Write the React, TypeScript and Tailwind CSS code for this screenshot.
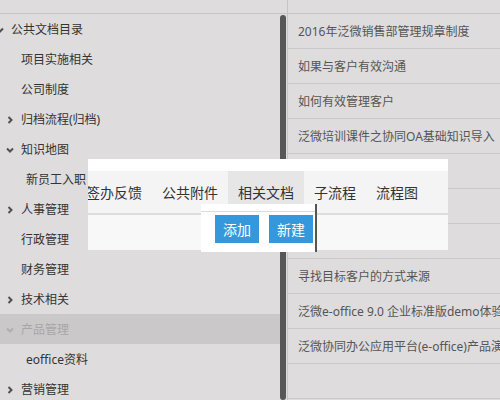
import React from "react";

type Chev = "down" | "right" | null;

const tree: { label: string; pad: string; chev: Chev; active?: boolean }[] = [
	{ label: "公共文档目录", pad: "pl-[4px]", chev: "down" },
	{ label: "项目实施相关", pad: "pl-[29px]", chev: null },
	{ label: "公司制度", pad: "pl-[29px]", chev: null },
	{ label: "归档流程(归档)", pad: "pl-[14px]", chev: "right" },
	{ label: "知识地图", pad: "pl-[14px]", chev: "down" },
	{ label: "新员工入职", pad: "pl-[34px]", chev: null },
	{ label: "人事管理", pad: "pl-[14px]", chev: "right" },
	{ label: "行政管理", pad: "pl-[29px]", chev: null },
	{ label: "财务管理", pad: "pl-[29px]", chev: null },
	{ label: "技术相关", pad: "pl-[14px]", chev: "right" },
	{ label: "产品管理", pad: "pl-[14px]", chev: "down", active: true },
	{ label: "eoffice资料", pad: "pl-[34px]", chev: null },
	{ label: "营销管理", pad: "pl-[14px]", chev: "right" },
];

const docs = [
	"2016年泛微销售部管理规章制度",
	"如果与客户有效沟通",
	"如何有效管理客户",
	"泛微培训课件之协同OA基础知识导入",
	"",
	"",
	"",
	"寻找目标客户的方式来源",
	"泛微e-office 9.0 企业标准版demo体验环境",
	"泛微协同办公应用平台(e-office)产品演示",
	"",
];

const tabs = ["签办反馈", "公共附件", "相关文档", "子流程", "流程图"];

function Chevron({ dir, muted }: { dir: "down" | "right"; muted?: boolean }) {
	return (
		<svg width="8" height="8" viewBox="0 0 8 8" className="shrink-0">
			<polyline
				points={dir === "down" ? "1,2.5 4,5.5 7,2.5" : "2.5,1 5.5,4 2.5,7"}
				fill="none"
				stroke={muted ? "#b0aeaf" : "#505050"}
				strokeWidth="2"
			/>
		</svg>
	);
}

export default function App() {
	return (
		<div className="relative h-[400px] w-[500px] overflow-hidden bg-[#dedcdd] font-[family-name:'Noto_Sans','Noto_Sans_CJK_SC',sans-serif] text-[12px]">
			<div className="flex h-full">
				{/* tree */}
				<div className="flex w-[288px] shrink-0 flex-col border-r border-[#c6c4c5]">
					<div className="h-[14px] shrink-0 border-b border-[#c6c4c5]"></div>
					<div className="flex min-h-0 flex-1">
						<div className="w-[280px] overflow-hidden">
							<div className="-ml-[8px] w-[288px]">
								{tree.map((t) => (
									<div
										key={t.label}
										className={
											"flex h-[30px] items-center whitespace-nowrap pt-[1px] " +
											t.pad +
											(t.active ? " bg-[#cac8c9] text-[#a8a6a7]" : " text-[#333333]")
										}
									>
										{t.chev && (
											<div className="flex w-[15px] shrink-0">
												<Chevron dir={t.chev} muted={t.active} />
											</div>
										)}
										<span>{t.label}</span>
									</div>
								))}
							</div>
						</div>
						<div className="w-[7px] pt-[1px]">
							<div className="h-full w-[6px] rounded-full bg-[#575757]"></div>
						</div>
					</div>
				</div>

				{/* documents */}
				<div className="flex min-w-0 flex-1 flex-col">
					<div className="h-[14px] shrink-0 border-b border-[#c6c4c5]"></div>
					{docs.map((d, i) => (
						<div
							key={i}
							className="flex h-[35px] shrink-0 items-center overflow-hidden whitespace-nowrap border-b border-[#cac8c9] px-[10px] pt-[2px] text-[#555555]"
						>
							{d}
						</div>
					))}
				</div>
			</div>

			{/* floating tab panel */}
			<div className="absolute left-[88px] top-[159px] flex h-[91px] w-[360px] flex-col overflow-hidden bg-white">
				<div className="h-[12px] shrink-0"></div>
				<div className="flex h-[42px] shrink-0 bg-[#f4f4f4]">
					<div className="-ml-[12px] flex">
						{tabs.map((t) => (
							<div
								key={t}
								className={
									"h-[34px] whitespace-nowrap px-[10px] pt-[12px] text-[14px] leading-[20px] text-[#333333]" +
									(t === "相关文档" ? " bg-[#e6e6e6]" : "")
								}
							>
								{t}
							</div>
						))}
					</div>
				</div>
				<div className="h-[2px] shrink-0 bg-[#dddddd]"></div>
				<div className="flex-1 bg-[#f8f8f8]"></div>
			</div>

			{/* action box */}
			<div className="absolute left-[201px] top-[204px] h-[48px] w-[116px] border-r-2 border-[#555555] bg-white pt-[7px]">
				<div className="h-px bg-[#dddddd]"></div>
				<div className="flex justify-end gap-[10px] pr-[2px] pt-[3px]">
					<button className="flex h-[28px] w-[44px] items-center justify-center bg-[#3598dc] text-[14px] text-white">
						添加
					</button>
					<button className="flex h-[28px] w-[44px] items-center justify-center bg-[#3598dc] text-[14px] text-white">
						新建
					</button>
				</div>
			</div>
		</div>
	);
}
